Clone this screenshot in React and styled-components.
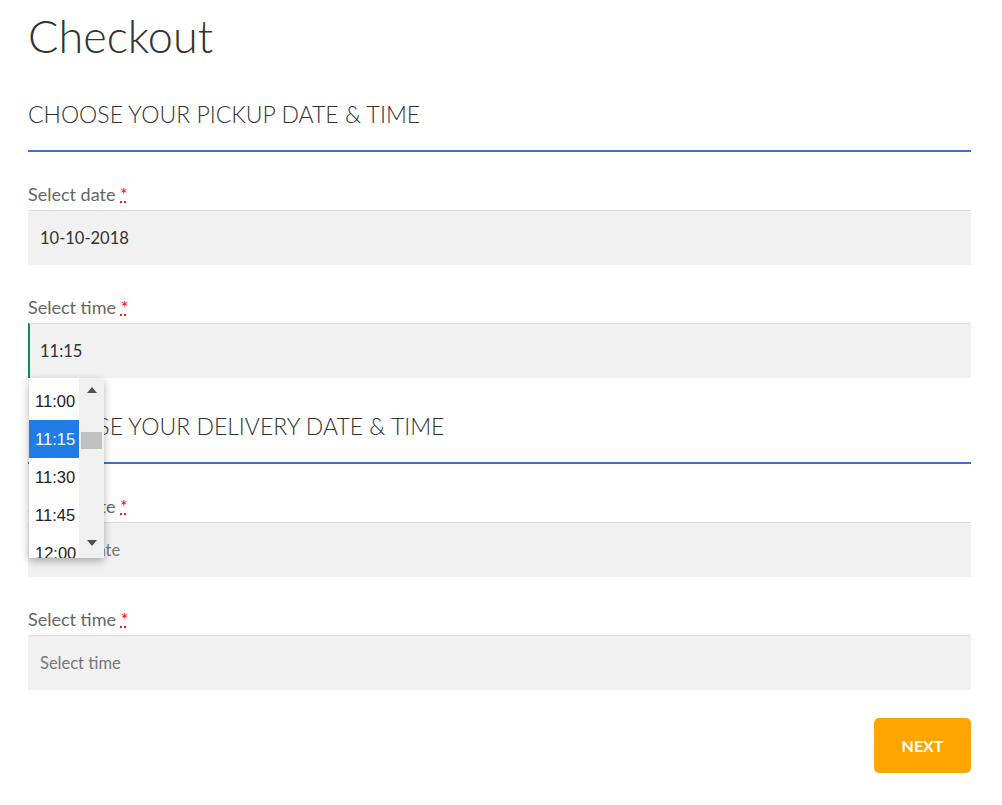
import React from "react"
import styled, { createGlobalStyle } from "styled-components"

const GlobalStyle = createGlobalStyle`
  body {
    margin: 0;
    background: #fff;
    font-family: Lato, "Open Sans", sans-serif;
  }
`

const times = ["11:00", "11:15", "11:30", "11:45", "12:00"]

const App = () => {
  return (
    <Page>
      <GlobalStyle />
      <Title>Checkout</Title>

      <Section>
        <Heading>Choose your pickup date &amp; time</Heading>
        <Field>
          <Label>
            Select date <Req title="required">*</Req>
          </Label>
          <Input>10-10-2018</Input>
        </Field>
        <Field>
          <Label>
            Select time <Req title="required">*</Req>
          </Label>
          <Anchor>
            <Input focused>11:15</Input>
            <Dropdown>
              <List>
                {times.map((t) => (
                  <Option key={t} selected={t === "11:15"}>
                    {t}
                  </Option>
                ))}
              </List>
              <Scrollbar>
                <Arrow viewBox="0 0 10 6">
                  <path d="M0 6 L5 0 L10 6 Z" />
                </Arrow>
                <Track>
                  <Thumb />
                </Track>
                <Arrow viewBox="0 0 10 6">
                  <path d="M0 0 L10 0 L5 6 Z" />
                </Arrow>
              </Scrollbar>
            </Dropdown>
          </Anchor>
        </Field>
      </Section>

      <Section>
        <Heading>Choose your delivery date &amp; time</Heading>
        <Field>
          <Label>
            Select date <Req title="required">*</Req>
          </Label>
          <Input placeholder="true">Select date</Input>
        </Field>
        <Field>
          <Label>
            Select time <Req title="required">*</Req>
          </Label>
          <Input placeholder="true">Select time</Input>
        </Field>
      </Section>

      <Footer>
        <NextButton>NEXT</NextButton>
      </Footer>
    </Page>
  )
}

export default App

const Page = styled.div`
  padding: 0 31px 0 28px;
`

const Title = styled.h1`
  margin: 0 0 31px;
  padding-top: 8px;
  font-size: 45px;
  line-height: 56px;
  font-weight: 300;
  color: #333;
`

const Section = styled.section`
  padding-top: 4px;
`

const Heading = styled.h2`
  margin: 0 0 29px;
  padding-bottom: 21px;
  border-bottom: 2px solid #4169e1;
  font-size: 23px;
  line-height: 30px;
  font-weight: 300;
  text-transform: uppercase;
  color: #333;
`

const Field = styled.div`
  margin-bottom: 29px;
`

const Label = styled.label`
  display: block;
  margin-bottom: 3px;
  font-size: 18px;
  line-height: 26px;
  color: #666;
`

const Req = styled.abbr`
  color: #f00;
  text-decoration: underline dotted #f00;
`

const Anchor = styled.div`
  position: relative;
`

const Input = styled.div`
  height: 55px;
  box-sizing: border-box;
  display: flex;
  align-items: center;
  padding: 0 12px 0 10px;
  background: #f1f1f1;
  border-top: 1px solid #dcdcdc;
  border-left: 2px solid ${({ focused }) => (focused ? "#0f8a57" : "transparent")};
  font-size: 16.5px;
  color: ${({ placeholder }) => (placeholder ? "#777" : "#333")};
`

const Dropdown = styled.div`
  position: absolute;
  top: 100%;
  left: 1px;
  width: 75px;
  height: 180px;
  display: flex;
  background: #fff;
  box-shadow: 0 3px 8px rgba(0, 0, 0, 0.3);
  overflow: hidden;
  z-index: 10;
`

const List = styled.ul`
  list-style: none;
  margin: 0;
  padding: 4px 0 0;
  width: 50px;
`

const Option = styled.li`
  height: 38px;
  display: flex;
  align-items: center;
  padding-left: 6px;
  font-family: "Liberation Sans", Arial, sans-serif;
  font-size: 16.5px;
  color: ${({ selected }) => (selected ? "#fff" : "#222")};
  background: ${({ selected }) => (selected ? "#1e7de6" : "transparent")};
`

const Scrollbar = styled.div`
  width: 25px;
  background: #f0f0f0;
  display: flex;
  flex-direction: column;
  align-items: center;
  padding: 9px 0 12px;
  box-sizing: border-box;
`

const Arrow = styled.svg`
  width: 10px;
  height: 6px;
  fill: #505050;
`

const Track = styled.div`
  flex: 1;
  width: 100%;
  padding: 39px 2px 0;
  box-sizing: border-box;
`

const Thumb = styled.div`
  height: 17px;
  background: #c1c1c1;
`

const Footer = styled.div`
  display: flex;
  justify-content: flex-end;
  margin-top: -1px;
`

const NextButton = styled.button`
  width: 97px;
  height: 55px;
  border: none;
  border-radius: 5px;
  background: #ffa500;
  color: #fff;
  font-family: inherit;
  font-size: 16px;
  font-weight: 700;
`
